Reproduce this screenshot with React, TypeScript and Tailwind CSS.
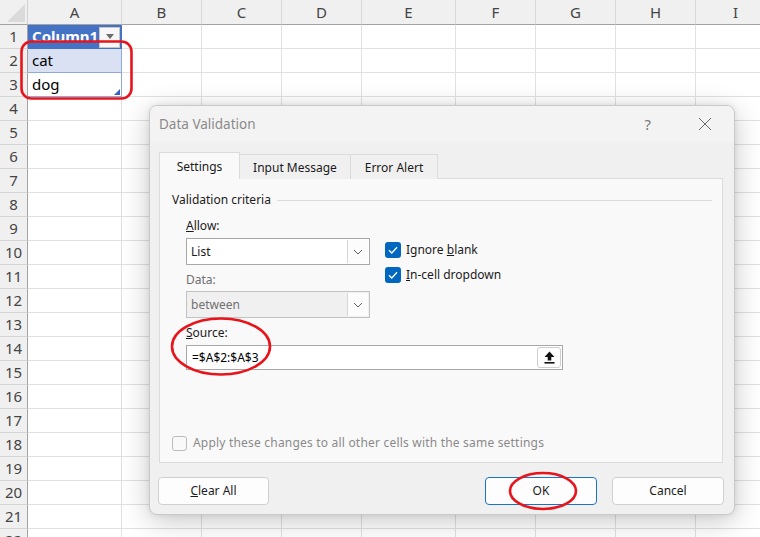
import React from "react";

const COLS = ["A", "B", "C", "D", "E", "F", "G", "H", "I"];
const ROWS = Array.from({ length: 22 }, (_, i) => i + 1);
const GRID = "grid grid-cols-[28px_94px_80px_80px_80px_94px_80px_80px_80px_80px]";

function Chevron() {
  return (
    <svg width="10" height="6" viewBox="0 0 10 6">
      <path d="M1 1 L5 5 L9 1" fill="none" stroke="#5f5f5f" strokeWidth="1" />
    </svg>
  );
}

function Check() {
  return (
    <svg width="10" height="8" viewBox="0 0 10 8">
      <path d="M1 4.2 L3.8 7 L9 1.2" fill="none" stroke="#ffffff" strokeWidth="1.3" />
    </svg>
  );
}

function Grid() {
  return (
    <div className="text-[15px] text-[#444]" style={{ fontFamily: '"Noto Sans", sans-serif' }}>
      <div className={`${GRID} h-[25px]`}>
        <div className="relative bg-[#f0f0f0] border-r border-b border-r-[#d0d0d0] border-b-[#a3a3a3]">
          <svg className="absolute right-[2px] bottom-[2px]" width="18" height="18" viewBox="0 0 18 18">
            <path d="M18 0 L18 18 L0 18 Z" fill="#dadada" />
          </svg>
        </div>
        {COLS.map((c) => (
          <div
            key={c}
            className="bg-[#f0f0f0] border-r border-b border-r-[#d8d8d8] border-b-[#a3a3a3] flex items-center justify-center leading-none"
          >
            {c}
          </div>
        ))}
      </div>
      {ROWS.map((r) => (
        <div key={r} className={`${GRID} h-[24px]`}>
          <div className="bg-[#f0f0f0] border-r border-b border-r-[#a3a3a3] border-b-[#d5d5d5] flex items-center justify-center leading-none">
            {r}
          </div>
          {COLS.map((c) => {
            if (c === "A" && r === 1) {
              return (
                <div key={c} className="relative bg-[#4472c4] border-r border-b border-r-[#4472c4] border-b-[#4472c4] overflow-hidden">
                  <div className="pl-[4px] font-bold text-white leading-[23px] whitespace-nowrap">Column1</div>
                  <div className="absolute right-[1px] top-[2px] w-[21px] h-[21px] bg-[#f7f7f7] border border-[#c6c6c6] flex items-start justify-center pt-[6px]">
                    <svg width="8" height="5" viewBox="0 0 8 5">
                      <path d="M0 0 L8 0 L4 5 Z" fill="#6b6b6b" />
                    </svg>
                  </div>
                </div>
              );
            }
            if (c === "A" && r === 2) {
              return (
                <div key={c} className="bg-[#d9e1f2] border-r border-b border-r-[#8ea9db] border-b-[#8ea9db] pl-[4px] text-black leading-[23px]">
                  cat
                </div>
              );
            }
            if (c === "A" && r === 3) {
              return (
                <div key={c} className="relative bg-white border-r border-b border-r-[#8ea9db] border-b-[#8ea9db] pl-[4px] text-black leading-[23px]">
                  dog
                  <svg className="absolute right-[1px] bottom-[1px]" width="6" height="6" viewBox="0 0 6 6">
                    <path d="M6 0 L6 6 L0 6 Z" fill="#3a5fc4" />
                  </svg>
                </div>
              );
            }
            return <div key={c} className="bg-white border-r border-b border-[#e1e1e1]" />;
          })}
        </div>
      ))}
    </div>
  );
}

function Select({ value, disabled }: { value: string; disabled?: boolean }) {
  return (
    <div
      className={
        disabled
          ? "flex h-[27px] w-[184px] border border-[#c2c2c2] bg-[#f0f0f0] text-[#707070]"
          : "flex h-[27px] w-[184px] border border-[#a8a8a8] bg-white text-[#1a1a1a]"
      }
    >
      <div className="flex-1 pl-[4px] flex items-center">{value}</div>
      <div className="w-[21px] my-[1px] mr-[1px] border-l border-[#d6d6d6] bg-[#fcfcfc] flex items-center justify-center">
        <Chevron />
      </div>
    </div>
  );
}

function Dialog() {
  return (
    <div
      className="absolute left-[149px] top-[105px] w-[586px] h-[410px] rounded-[8px] border border-[#c9c9c9] bg-[#f0f0f0] overflow-hidden shadow-[0_6px_28px_rgba(0,0,0,0.22),0_0_6px_rgba(0,0,0,0.08)] flex flex-col text-[12px] text-[#1b1b1b]"
      style={{ fontFamily: '"Noto Sans", sans-serif' }}
    >
      {/* Title bar */}
      <div className="h-[36px] bg-[#f3f3f3] flex items-center pl-[9px] shrink-0">
        <div className="text-[13.5px] text-[#8a8a8a] flex-1">Data Validation</div>
        <div className="text-[15px] text-[#7a7a7a] mr-[47px]">?</div>
        <svg className="mr-[22px]" width="14" height="14" viewBox="0 0 14 14">
          <path d="M1 1 L13 13 M13 1 L1 13" stroke="#6a6a6a" strokeWidth="1" />
        </svg>
      </div>

      <div className="flex flex-col pl-[9px] pr-[11px]">
        {/* Tabs */}
        <div className="flex items-end h-[27px] mt-[10px] -mb-px relative z-10">
          <div className="w-[81px] h-[27px] pt-[2px] bg-[#f9f9f9] border border-b-0 border-[#dcdcdc] flex items-center justify-center">
            Settings
          </div>
          <div className="w-[111px] h-[25px] pt-[2px] bg-[#f0f0f0] border-t border-r border-[#dcdcdc] flex items-center justify-center">
            Input Message
          </div>
          <div className="w-[87px] h-[25px] pt-[2px] bg-[#f0f0f0] border-t border-r border-[#dcdcdc] flex items-center justify-center">
            Error Alert
          </div>
        </div>

        {/* Panel */}
        <div className="h-[285px] bg-[#f9f9f9] border border-[#dcdcdc] flex flex-col">
          <div className="flex items-center h-[16px] mt-[13px] ml-[12px] mr-[10px]">
            <span>Validation criteria</span>
            <div className="flex-1 ml-[6px] border-t border-[#dcdcdc]" />
          </div>

          <div className="ml-[26px] flex">
            <div className="flex flex-col">
              <div className="h-[16px] leading-[16px] mt-[10px]">
                <span className="underline">A</span>llow:
              </div>
              <div className="mt-[4px]">
                <Select value="List" />
              </div>
              <div className="h-[16px] leading-[16px] mt-[7px] text-[#707070]">Data:</div>
              <div className="mt-[3px]">
                <Select value="between" disabled />
              </div>
            </div>
            <div className="flex flex-col ml-[15px] pt-[34px] gap-[9px]">
              <div className="flex items-center h-[16px]">
                <div className="w-[16px] h-[16px] rounded-[3px] bg-[#0067c0] flex items-center justify-center">
                  <Check />
                </div>
                <span className="ml-[5px]">
                  Ignore <span className="underline">b</span>lank
                </span>
              </div>
              <div className="flex items-center h-[16px]">
                <div className="w-[16px] h-[16px] rounded-[3px] bg-[#0067c0] flex items-center justify-center">
                  <Check />
                </div>
                <span className="ml-[5px]">
                  <span className="underline">I</span>n-cell dropdown
                </span>
              </div>
            </div>
          </div>

          <div className="ml-[26px] h-[16px] leading-[16px] mt-[7px]">
            <span className="underline">S</span>ource:
          </div>
          <div className="ml-[26px] mt-[4px] w-[377px] h-[25px] bg-white border border-[#a8a8a8] flex items-center">
            <div className="flex-1 pl-[5px] text-black">=$A$2:$A$3</div>
            <div className="w-[24px] h-[21px] mr-[1px] rounded-[3px] border border-[#cfcfcf] bg-white flex items-center justify-center">
              <svg width="11" height="13" viewBox="0 0 11 13">
                <path d="M5.5 0.5 L10.5 6 L7.3 6 L7.3 9.5 L3.7 9.5 L3.7 6 L0.5 6 Z" fill="#111" />
                <rect x="0.5" y="11" width="10" height="1.6" fill="#111" />
              </svg>
            </div>
          </div>

          <div className="mt-auto mb-[11px] ml-[12px] flex items-center h-[16px]">
            <div className="w-[15px] h-[15px] rounded-[3px] border border-[#bcbcbc] bg-[#f9f9f9]" />
            <span className="ml-[6px] text-[#8a8a8a] tracking-[0.2px]">Apply these changes to all other cells with the same settings</span>
          </div>
        </div>

        {/* Buttons */}
        <div className="flex mt-[14px] items-center">
          <div className="ml-[-1px] w-[111px] h-[28px] rounded-[4px] border border-[#d0d0d0] bg-[#fdfdfd] flex items-center justify-center">
            <span>
              <span className="underline">C</span>lear All
            </span>
          </div>
          <div className="flex-1" />
          <div className="w-[112px] h-[28px] rounded-[4px] border border-[#1a73c8] bg-[#fdfdfd] flex items-center justify-center">
            OK
          </div>
          <div className="ml-[15px] mr-[-1px] w-[112px] h-[28px] rounded-[4px] border border-[#d0d0d0] bg-[#fdfdfd] flex items-center justify-center">
            Cancel
          </div>
        </div>
      </div>
    </div>
  );
}

export default function App() {
  return (
    <div className="relative w-[760px] h-[537px] overflow-hidden bg-white">
      <Grid />
      <Dialog />
      <svg className="absolute left-0 top-0 pointer-events-none" width="760" height="537" viewBox="0 0 760 537">
        <rect x="21.5" y="41.5" width="110" height="57" rx="10" fill="none" stroke="#e8141c" strokeWidth="2.6" />
        <ellipse cx="221" cy="346.5" rx="49" ry="28" fill="none" stroke="#e8141c" strokeWidth="2.6" />
        <ellipse cx="543" cy="491" rx="33" ry="18" fill="none" stroke="#e8141c" strokeWidth="2.6" />
      </svg>
    </div>
  );
}
